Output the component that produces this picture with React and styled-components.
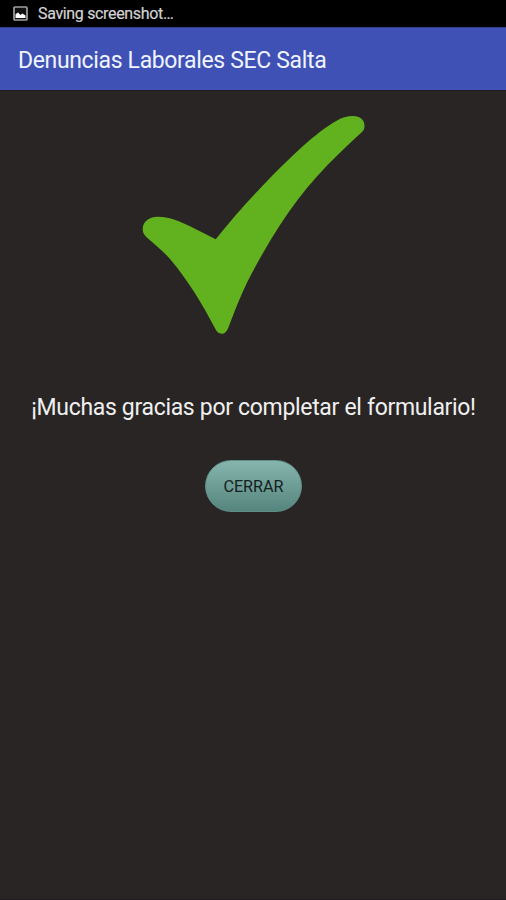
import React from 'react';
import styled, { createGlobalStyle } from 'styled-components';

const GlobalStyle = createGlobalStyle`
  body {
    margin: 0;
    background: #292524;
    font-family: Roboto, sans-serif;
  }
`;

const Screen = styled.div`
  display: flex;
  flex-direction: column;
  box-sizing: border-box;
  height: 900px;
  background: #292524;
  border-bottom: 1px solid #211b24;
`;

const StatusBar = styled.div`
  display: flex;
  align-items: center;
  gap: 10px;
  height: 27px;
  padding-left: 13px;
  background: #000;
  color: #d2d2d2;
  font-size: 16px;
  letter-spacing: -0.34px;
  -webkit-text-stroke: 0.2px;
  span {
    line-height: 27px;
    white-space: nowrap;
  }
`;

const AppBar = styled.header`
  display: flex;
  align-items: center;
  box-sizing: border-box;
  height: 64px;
  padding: 2px 18px 0;
  background: #3f51b5;
  border-top: 1px solid #303f8c;
  border-bottom: 1px solid #1b1b22;
  h1 {
    margin: 0;
    color: #f0f4ff;
    font-size: 23px;
    font-weight: 400;
    letter-spacing: -0.35px;
    white-space: nowrap;
  }
`;

const Content = styled.main`
  display: flex;
  flex-direction: column;
  align-items: center;
  padding: 25px 0 0 1px;
`;

const CheckMark = styled.svg`
  display: block;
  width: 223px;
  height: 218px;
`;

const Message = styled.p`
  margin: 58px 0 0;
  color: #f0f0f0;
  font-size: 23px;
  letter-spacing: -0.32px;
  line-height: 32px;
  white-space: nowrap;
`;

const CloseButton = styled.button`
  box-sizing: border-box;
  width: 97px;
  height: 52px;
  margin: 36px 0 0;
  padding: 0;
  border: 1px solid #5e8f87;
  border-radius: 27px;
  background: linear-gradient(#86b5ad, #56857e);
  color: #14211f;
  font-family: inherit;
  font-size: 16.2px;
  cursor: pointer;
`;

const PictureIcon = () => (
  <svg width="15" height="15" viewBox="0 0 15 15">
    <rect x="1" y="1" width="13" height="13" rx="1" fill="#111" stroke="#a0a0a0" strokeWidth="1.7" />
    <path d="M2.5 12V8.2L5 6.5l2.5 2.4 1.8-1.3 3.2 2V12z" fill="#fff" />
  </svg>
);

const App = () => (
  <>
    <GlobalStyle />
    <Screen>
      <StatusBar>
        <PictureIcon />
        <span>Saving screenshot…</span>
      </StatusBar>
      <AppBar>
        <h1>Denuncias Laborales SEC Salta</h1>
      </AppBar>
      <Content>
        <CheckMark viewBox="0 0 223 218">
          <path
            d="M73.7 123.3C88 105 104 87 121.3 69C134 55.500 147 42.500 161.3 29.700C173 19.500 184 10.500 194.700 4.700C200 1.500 205 0 211 0C218 0 222.500 4 222.500 9.500C222.500 12.500 222 14 219.700 16.300C204 31 189 44.500 174.700 60.700C161 76 149 92 138 109C126 127.500 115 147 104.700 167.300C98 181 92 197 86.300 211.700C84.500 216 82.500 217.700 79.700 217.700C76.500 217.700 74.500 215.500 73 212.300C66.500 200 60 188.500 53 177.300C45 165 37 153.500 28 143C20.500 134.500 12.500 128 4 120.700C1.500 118 .7 116 .7 112.800C.7 106 7 100.700 15.500 100.700C23 100.700 30 102.500 38 105.700C50 110.500 62 117.500 73.700 123.300Z"
            fill="#62b11e"
          />
        </CheckMark>
        <Message>¡Muchas gracias por completar el formulario!</Message>
        <CloseButton>CERRAR</CloseButton>
      </Content>
    </Screen>
  </>
);

export default App;
